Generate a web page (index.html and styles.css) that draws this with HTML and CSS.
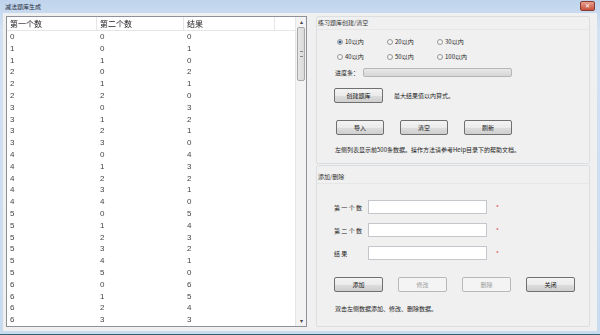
FILE: index.html
```html
<!DOCTYPE html>
<html lang="zh-CN">
<head>
    <meta charset="UTF-8">
    <title>减法题库生成</title>
    <link rel="stylesheet" href="styles.css">
</head>
<body>
<div class="window">
    <!-- 标题栏 -->
    <div class="titlebar">
        <span class="title">减法题库生成</span>
        <span class="close">✕</span>
    </div>

    <div class="client">
        <!-- 左侧列表 -->
        <div class="list">
            <div class="table">
                <div class="thead">
                    <span class="c1">第一个数</span>
                    <span class="c2">第二个数</span>
                    <span class="c3">结果</span>
                    <span class="c4"></span>
                </div>
                <div id="rows"></div>
            </div>
            <div class="scrollbar">
                <div class="arrow">▴</div>
                <div class="thumb"><i></i></div>
                <div class="track"></div>
                <div class="arrow">▾</div>
            </div>
        </div>

        <!-- 右侧 -->
        <div class="side">
            <div class="group group1">
                <div class="group-title">练习题库创建/清空</div>
                <div class="radios">
                    <label class="radio checked"><i></i>10以内</label>
                    <label class="radio"><i></i>20以内</label>
                    <label class="radio"><i></i>30以内</label>
                    <label class="radio"><i></i>40以内</label>
                    <label class="radio"><i></i>50以内</label>
                    <label class="radio"><i></i>100以内</label>
                </div>
                <div class="progress-row">
                    <span>进度条：</span>
                    <div class="progress"></div>
                </div>
                <div class="create-row">
                    <button>创建题库</button>
                    <span>最大结果值以内算式。</span>
                </div>
                <div class="btn-row">
                    <button>导入</button>
                    <button>清空</button>
                    <button>刷新</button>
                </div>
                <p class="note">左侧列表显示前500条数据。操作方法请参考Help目录下的帮助文档。</p>
            </div>

            <div class="group group2">
                <div class="group-title">添加/删除</div>
                <div class="form">
                    <div class="form-row"><span class="lbl">第 一 个 数</span><input type="text"><span class="star">*</span></div>
                    <div class="form-row"><span class="lbl">第 二 个 数</span><input type="text"><span class="star">*</span></div>
                    <div class="form-row"><span class="lbl">结 果</span><input type="text"><span class="star">*</span></div>
                </div>
                <div class="btn-row btn-row2">
                    <button>添加</button>
                    <button disabled>修改</button>
                    <button disabled>删除</button>
                    <button>关闭</button>
                </div>
                <p class="note">双击左侧数据添加、修改、删除数据。</p>
            </div>
        </div>
    </div>
</div>

<script>
    // 生成前几条减法数据
    var html = '';
    var count = 0;
    for (var a = 0; a <= 10 && count < 25; a++) {
        for (var b = 0; b <= a && count < 25; b++) {
            html += '<div class="row"><span class="c1">' + a + '</span><span class="c2">' + b +
                    '</span><span class="c3">' + (a - b) + '</span></div>';
            count++;
        }
    }
    document.getElementById('rows').innerHTML = html;
</script>
</body>
</html>
```

FILE: styles.css
```css
body {
    margin: 0;
    font-family: "Noto Sans CJK SC", "Liberation Sans", sans-serif;
    color: #222;
}
.window {
    width: 600px;
    height: 335px;
    box-sizing: border-box;
    background: linear-gradient(#bfd4ec, #d3e2f3 30px, #c9dbef);
    padding: 0 3px 3px 3px;
    border-bottom: 1px solid #2e6672;
    display: flex;
    flex-direction: column;
}
.titlebar {
    height: 14px;
    display: flex;
    align-items: center;
    justify-content: space-between;
    padding-left: 2px;
}
.title {
    font-size: 6px;
    color: #1e2a3a;
}
.close {
    width: 13px;
    height: 8px;
    margin-right: 2px;
    margin-top: -2px;
    background: linear-gradient(#e8a090, #c8503c);
    border: 1px solid #8a3a2e;
    border-radius: 2px;
    color: #fff;
    font-size: 6px;
    line-height: 8px;
    text-align: center;
}
.client {
    flex: 1;
    background: #f0f0f0;
    display: flex;
    gap: 9px;
    padding: 3px 7px 4px 3px;
}

/* 左侧列表 */
.list {
    width: 301px;
    box-sizing: border-box;
    border: 1px solid #8d9299;
    background: #fff;
    display: flex;
}
.table {
    flex: 1;
    overflow: hidden;
    filter: grayscale(1);
}
.thead {
    height: 13px;
    display: flex;
    border-bottom: 1px solid #e3e6ea;
    font-size: 8px;
    line-height: 13px;
    color: #1a1a1a;
}
.thead span {
    border-right: 1px solid #e3e6ea;
    box-sizing: border-box;
}
.thead .c4 {
    flex: 1;
    border-right: none;
}
.c1, .c2, .c3 {
    padding-left: 3px;
    box-sizing: border-box;
}
.c1 { width: 90px; }
.c2 { width: 87px; }
.c3 { width: 91px; }
.row {
    height: 11.8px;
    display: flex;
    font-family: "Liberation Sans", sans-serif;
    font-size: 8px;
    line-height: 11.8px;
    color: #444;
}
.scrollbar {
    width: 10px;
    background: #f3f3f3;
    border-left: 1px solid #e6e6e6;
    display: flex;
    flex-direction: column;
}
.arrow {
    height: 10px;
    font-size: 6px;
    line-height: 10px;
    text-align: center;
    color: #444;
}
.thumb {
    height: 52px;
    margin: 0 1px;
    background: linear-gradient(90deg, #e6e6e6, #dadada);
    border: 1px solid #a8a8a8;
    border-radius: 2px;
    display: flex;
    align-items: center;
    justify-content: center;
}
.thumb i {
    width: 3px;
    height: 4px;
    border-top: 1px solid #888;
    border-bottom: 1px solid #888;
}
.track {
    flex: 1;
}

/* 右侧 */
.side {
    flex: 1;
    display: flex;
    flex-direction: column;
    gap: 1px;
}
.group {
    border: 1px solid #dcdfe2;
    border-radius: 2px;
    box-sizing: border-box;
    font-size: 6px;
    color: #222;
}
.group1 {
    height: 148px;
}
.group2 {
    flex: 1;
}
.group-title {
    height: 12px;
    line-height: 12px;
    padding-left: 1px;
    border-bottom: 1px solid #e6e6e6;
    color: #333;
}
.group2 .group-title {
    height: 13px;
    padding-top: 4px;
    line-height: 13px;
}
.radios {
    display: grid;
    grid-template-columns: 50px 50px 50px;
    grid-auto-rows: 15px;
    padding: 4px 0 0 20px;
}
.radio {
    display: flex;
    align-items: center;
    gap: 2px;
}
.radio i {
    width: 4px;
    height: 4px;
    border: 1px solid #9a9a9a;
    border-radius: 50%;
    background: radial-gradient(#fff, #e4e4e4);
}
.radio.checked i {
    background: radial-gradient(#2d5b8c 45%, #dfe6ee 60%);
}
.progress-row {
    display: flex;
    align-items: center;
    height: 12px;
    margin-top: 2px;
    padding-left: 18px;
}
.progress-row span {
    width: 28px;
}
.progress {
    width: 147px;
    height: 7px;
    border: 1px solid #b6b6b6;
    border-radius: 2px;
    background: linear-gradient(#e8e8e8, #d6d6d6);
}
.create-row {
    display: flex;
    align-items: center;
    gap: 11px;
    margin-top: 10px;
    padding-left: 17px;
}
button {
    width: 49px;
    height: 15px;
    padding: 0;
    border: 1px solid #707070;
    border-radius: 2px;
    background: linear-gradient(#f3f3f3, #ebebeb 50%, #dddddd 51%, #cfcfcf);
    font-family: inherit;
    font-size: 6px;
    color: #111;
}
button:disabled {
    border-color: #b5b9bc;
    background: #f4f4f4;
    color: #a0a0a0;
}
.btn-row {
    display: flex;
    gap: 16px;
    margin-top: 17px;
    padding-left: 19px;
}
.btn-row button {
    width: 48px;
}
.btn-row2 {
    gap: 15px;
    margin-top: 17px;
    padding-left: 17px;
}
.btn-row2 button {
    width: 49px;
}
.note {
    margin: 9px 0 0 18px;
    line-height: 12px;
}
.group2 .note {
    margin-top: 11px;
}
.form {
    display: flex;
    flex-direction: column;
    gap: 9px;
    margin-top: 16px;
    padding-left: 17px;
}
.form-row {
    display: flex;
    align-items: center;
    height: 14px;
}
.lbl {
    width: 34px;
}
.form-row input {
    width: 119px;
    height: 14px;
    box-sizing: border-box;
    border: 1px solid #c3c6cb;
    background: #fff;
    margin: 0;
}
.star {
    margin-left: 9px;
    color: #d04040;
}
```
